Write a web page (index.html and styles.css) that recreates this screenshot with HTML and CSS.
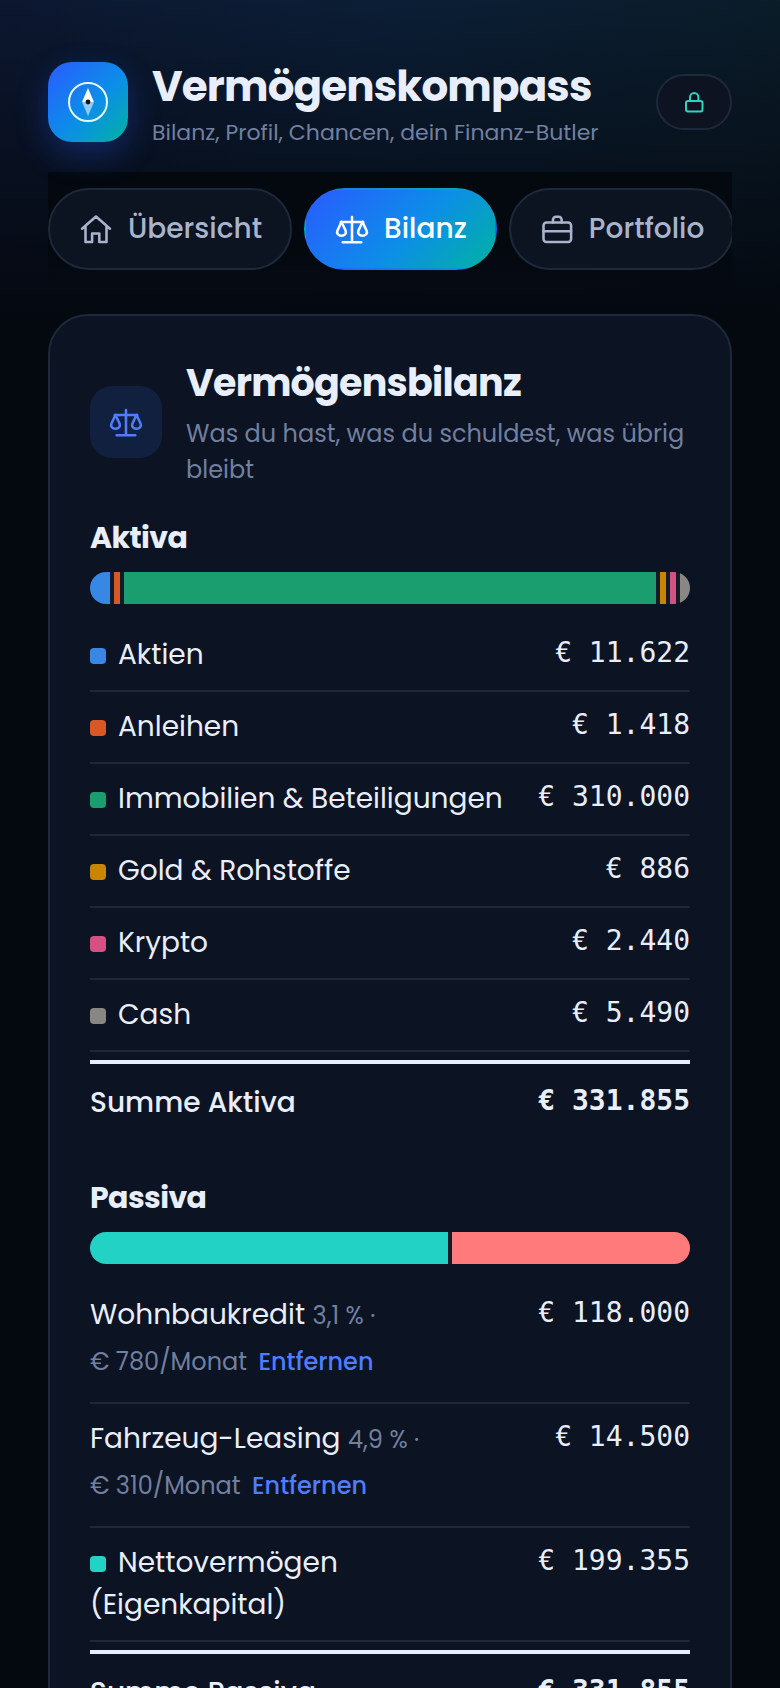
FILE: index.html
```html
<!DOCTYPE html>
<html lang="de">
<head>
    <meta charset="UTF-8">
    <meta name="viewport" content="width=device-width, initial-scale=1.0">
    <title>Vermögenskompass</title>
    <link rel="stylesheet" href="styles.css">
</head>
<body>
    <svg class="sprite" aria-hidden="true">
        <symbol id="icon-scale" viewBox="0 0 24 24">
            <path d="M12 4v16.800M5.800 20.800h12.400M4.500 7.300h15"/>
            <path d="M5 7.300 2.300 13c-.8 1.900.6 3.500 2.700 3.500s3.500-1.600 2.700-3.500z"/>
            <path d="M19 7.300 16.300 13c-.8 1.900.6 3.500 2.700 3.500s3.500-1.600 2.700-3.500z"/>
        </symbol>
    </svg>

    <div class="page">
        <header class="header">
            <div class="logo">
                <svg viewBox="0 0 40 40" aria-hidden="true">
                    <circle cx="20" cy="20" r="19" fill="none" stroke="#e8f8ff" stroke-width="2"/>
                    <path d="M20 6l6 14H14z" fill="#fff"/>
                    <path d="M20 34l6-14H14z" fill="#fff" opacity=".55"/>
                    <circle cx="20" cy="20" r="2.4" fill="#0b1526"/>
                </svg>
            </div>
            <div class="brand">
                <h1>Vermögenskompass</h1>
                <p>Bilanz, Profil, Chancen, dein Finanz-Butler</p>
            </div>
            <button class="lock" type="button" aria-label="Sperren">
                <svg class="icon" viewBox="0 0 24 24" aria-hidden="true">
                    <rect x="4" y="11" width="16.500" height="10.500" rx="2"/>
                    <path d="M8 11V7.200a4.200 4.200 0 0 1 8.400 0V11"/>
                </svg>
            </button>
        </header>

        <nav class="tabs">
            <a class="tab" href="#uebersicht">
                <svg class="icon" viewBox="0 0 24 24" aria-hidden="true"><path d="M2.700 11.800 12 3.700l9.300 8.100M5 10v10.600h4.400V15h4.800v5.600H19V10"/></svg>
                Übersicht
            </a>
            <a class="tab active" href="#bilanz">
                <svg class="icon" aria-hidden="true"><use href="#icon-scale"/></svg>
                Bilanz
            </a>
            <a class="tab" href="#portfolio">
                <svg class="icon" viewBox="0 0 24 24" aria-hidden="true"><rect x="3" y="7.700" width="18.400" height="13" rx="2"/><path d="M9.300 7.700V5.800a2 2 0 0 1 2-2h1.800a2 2 0 0 1 2 2v1.900M3 13.500h18.400"/></svg>
                Portfolio
            </a>
        </nav>

        <main class="card" id="bilanz">
            <div class="card-head">
                <div class="card-icon">
                    <svg class="icon" aria-hidden="true"><use href="#icon-scale"/></svg>
                </div>
                <div class="card-title">
                    <h2>Vermögensbilanz</h2>
                    <p>Was du hast, was du schuldest, was übrig bleibt</p>
                </div>
            </div>

            <section>
                <h3>Aktiva</h3>
                <div class="bar">
                    <span class="blue" style="flex-grow: 3.5"></span>
                    <span class="orange" style="flex-grow: 0.4"></span>
                    <span class="green" style="flex-grow: 93.4"></span>
                    <span class="gold" style="flex-grow: 0.3"></span>
                    <span class="pink" style="flex-grow: 0.7"></span>
                    <span class="grey" style="flex-grow: 1.7"></span>
                </div>
                <table class="ledger">
                    <tbody>
                        <tr><th scope="row"><i class="dot blue"></i>Aktien</th><td>€ 11.622</td></tr>
                        <tr><th scope="row"><i class="dot orange"></i>Anleihen</th><td>€ 1.418</td></tr>
                        <tr><th scope="row"><i class="dot green"></i>Immobilien &amp; Beteiligungen</th><td>€ 310.000</td></tr>
                        <tr><th scope="row"><i class="dot gold"></i>Gold &amp; Rohstoffe</th><td>€ 886</td></tr>
                        <tr><th scope="row"><i class="dot pink"></i>Krypto</th><td>€ 2.440</td></tr>
                        <tr><th scope="row"><i class="dot grey"></i>Cash</th><td>€ 5.490</td></tr>
                    </tbody>
                    <tfoot>
                        <tr><th scope="row">Summe Aktiva</th><td>€ 331.855</td></tr>
                    </tfoot>
                </table>
            </section>

            <section>
                <h3>Passiva</h3>
                <div class="bar">
                    <span class="teal" style="flex-grow: 60"></span>
                    <span class="red" style="flex-grow: 40"></span>
                </div>
                <table class="ledger">
                    <tbody>
                        <tr>
                            <th scope="row">Wohnbaukredit <small>3,1 % ·<br>€ 780/Monat</small> <button class="remove" type="button">Entfernen</button></th>
                            <td>€ 118.000</td>
                        </tr>
                        <tr>
                            <th scope="row">Fahrzeug-Leasing <small>4,9 % ·<br>€ 310/Monat</small> <button class="remove" type="button">Entfernen</button></th>
                            <td>€ 14.500</td>
                        </tr>
                        <tr><th scope="row"><i class="dot teal"></i>Nettovermögen<br>(Eigenkapital)</th><td>€ 199.355</td></tr>
                    </tbody>
                    <tfoot>
                        <tr><th scope="row">Summe Passiva</th><td>€ 331.855</td></tr>
                    </tfoot>
                </table>
            </section>
        </main>
    </div>
</body>
</html>
```
FILE: styles.css
```css
* {
    box-sizing: border-box;
}

html {
    background-color: #04080f;
}

body {
    margin: 0;
    font-family: Poppins, Inter, sans-serif;
    font-size: 28px;
    line-height: 42px;
    color: #e8eefc;
    background: linear-gradient(180deg, rgba(4, 8, 15, 0) 0, #04080f 320px),
        linear-gradient(90deg, #0c1730, #0b1e35 50%, #0a1c29);
}

h1, h2, h3, p {
    margin: 0;
}

h1, h2, h3 {
    font-weight: 700;
    letter-spacing: -0.02em;
}

.sprite {
    display: none;
}

.page {
    padding: 62px 48px 0;
}

.icon {
    width: 36px;
    height: 36px;
    flex: none;
    fill: none;
    stroke: currentColor;
    stroke-width: 1.7;
    stroke-linecap: round;
    stroke-linejoin: round;
}

/* header */
.header {
    display: flex;
    align-items: center;
    gap: 24px;
    height: 80px;
    margin-bottom: 30px;
}

.logo {
    display: flex;
    align-items: center;
    justify-content: center;
    width: 80px;
    height: 80px;
    border-radius: 24px;
    background: linear-gradient(135deg, #2a5bff, #0c8ee8 55%, #00b3a0);
    box-shadow: 0 12px 32px rgba(42, 91, 255, 0.3);
}

.logo svg {
    width: 40px;
    height: 40px;
}

.brand {
    flex: 1;
    white-space: nowrap;
}

.brand h1 {
    font-size: 42px;
    line-height: 62px;
}

.brand p {
    font-size: 22px;
    line-height: 30px;
    color: #7280a0;
}

.lock {
    display: flex;
    align-items: center;
    justify-content: center;
    width: 76px;
    height: 56px;
    padding: 0;
    border: 2px solid #1e283b;
    border-radius: 28px;
    background-color: #0d1320;
    color: #2dd4bf;
}

.lock .icon {
    width: 24px;
    height: 24px;
    stroke-width: 2;
}

/* tabs */
.tabs {
    display: flex;
    gap: 12px;
    padding: 16px 0;
    margin-bottom: 28px;
    overflow: hidden;
    background: linear-gradient(180deg, #04080f 70%, rgba(4, 8, 15, 0));
}

.tab {
    display: flex;
    flex: none;
    align-items: center;
    gap: 14px;
    height: 82px;
    padding: 0 28px;
    border: 2px solid #1e283b;
    border-radius: 41px;
    background-color: #0c1321;
    color: #a9b4cc;
    font-weight: 500;
    text-decoration: none;
}

.tab.active {
    border-color: transparent;
    background: linear-gradient(135deg, #2a5bff, #0c8ee8 55%, #00b3a0);
    color: #fff;
}

/* card */
.card {
    padding: 40px;
    border: 2px solid #1e283b;
    border-radius: 40px;
    background-color: #0c1322;
}

.card-head {
    display: flex;
    align-items: center;
    gap: 24px;
    margin-bottom: 28px;
}

.card-icon {
    display: flex;
    flex: none;
    align-items: center;
    justify-content: center;
    width: 72px;
    height: 72px;
    border-radius: 22px;
    background-color: #122040;
    color: #4f7dff;
}

.card-title h2 {
    margin-bottom: 6px;
    font-size: 38px;
    line-height: 54px;
}

.card-title p {
    font-size: 24px;
    line-height: 36px;
    color: #7280a0;
}

h3 {
    margin-bottom: 12px;
    font-size: 30px;
    line-height: 44px;
}

.bar {
    display: flex;
    gap: 4px;
    height: 32px;
    margin-bottom: 16px;
    border-radius: 16px;
    overflow: hidden;
    background-color: #131b2b;
}

.bar span {
    flex-basis: 0;
    min-width: 6px;
}

.blue { background-color: #3987e5; }
.orange { background-color: #d95926; }
.green { background-color: #1a9e6f; }
.gold { background-color: #c98500; }
.pink { background-color: #d55181; }
.grey { background-color: #898781; }
.teal { background-color: #22d3c5; }
.red { background-color: #ff7a7a; }

/* ledger */
.ledger,
.ledger tbody,
.ledger tfoot {
    display: block;
}

.ledger {
    margin-bottom: 34px;
}

.ledger tr {
    display: flex;
    justify-content: space-between;
    gap: 24px;
    padding: 14px 0;
    border-bottom: 2px solid #1e283b;
}

.ledger th,
.ledger td {
    padding: 0;
    font-weight: 400;
    text-align: left;
}

.ledger td {
    font-family: "DejaVu Sans Mono", monospace;
    line-height: 38px;
    white-space: nowrap;
}

.ledger tfoot tr {
    margin-top: 8px;
    padding: 18px 0;
    border-top: 4px solid #e8eefc;
    border-bottom: 0;
}

.ledger tfoot th {
    font-weight: 500;
}

.ledger tfoot td {
    font-weight: 700;
}

.ledger small,
.remove {
    font-size: 24px;
}

.ledger small {
    color: #7280a0;
}

.remove {
    padding: 4px 4px 5px;
    border: 0;
    background: none;
    color: #4f7dff;
    font-family: inherit;
    font-weight: 500;
    line-height: 42px;
}

.dot {
    display: inline-block;
    width: 16px;
    height: 16px;
    margin-right: 12px;
    border-radius: 4px;
}
```
